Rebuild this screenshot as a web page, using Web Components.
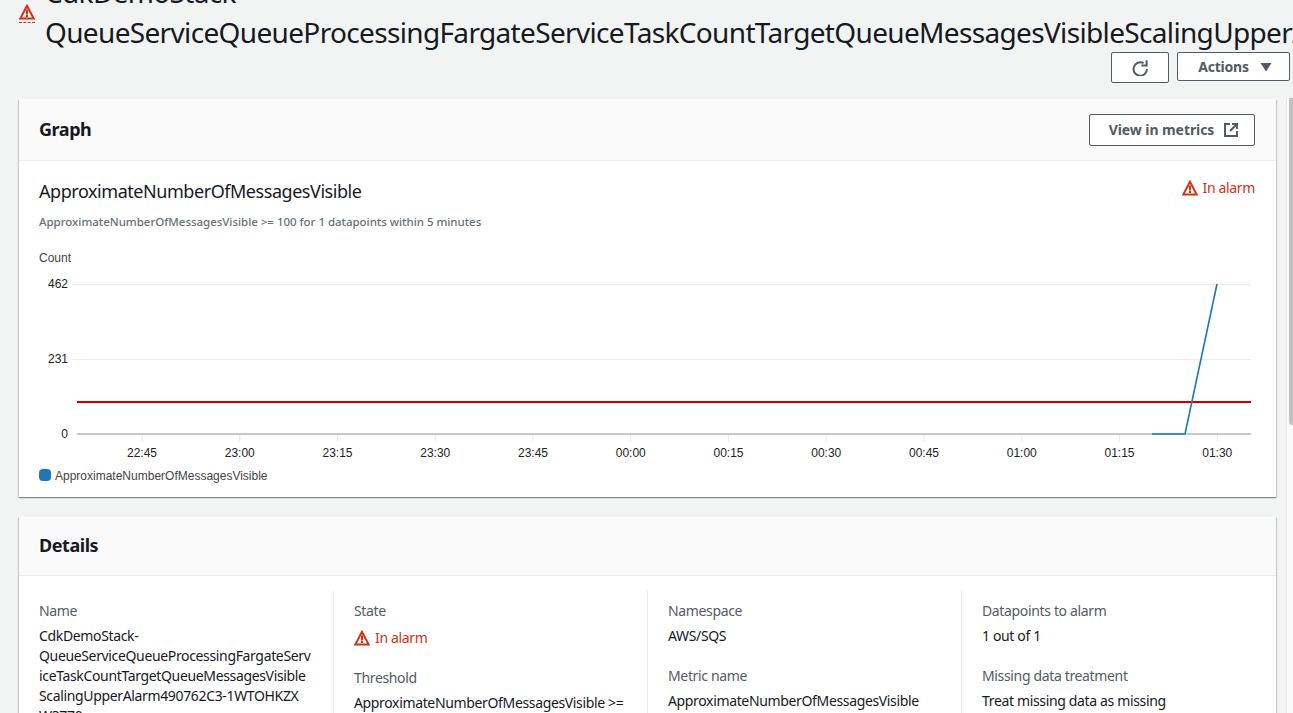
<!DOCTYPE html>
<html>
<head>
<meta charset="utf-8">
<title>Alarm</title>
<style>
  html, body { margin: 0; height: 100%; overflow: hidden; }
  body {
    background: #f2f3f3;
    color: #16191f;
    font-family: "Noto Sans", "Liberation Sans", sans-serif;
    font-size: 14px;
  }
</style>
</head>
<body>
<alarm-page>
  <alarm-header slot="header" title-text="CdkDemoStack- QueueServiceQueueProcessingFargateServiceTaskCountTargetQueueMessagesVisibleScalingUpperAlarm490762C3-1WTOHKZXW3770">
    <aws-button class="refresh" slot="actions" icon="refresh"></aws-button>
    <aws-button slot="actions" icon="caret" label="Actions"></aws-button>
  </alarm-header>

  <aws-card heading="Graph">
    <aws-button slot="action" icon="external" label="View in metrics"></aws-button>
    <metric-chart></metric-chart>
  </aws-card>

  <aws-card heading="Details">
    <details-grid>
      <div>
        <kv-item label="Name">
          <span style="display:block">CdkDemoStack-</span>
          <span style="display:block">QueueServiceQueueProcessingFargateServ</span>
          <span style="display:block">iceTaskCountTargetQueueMessagesVisible</span>
          <span style="display:block">ScalingUpperAlarm490762C3-1WTOHKZX</span>
          <span style="display:block">W3770</span>
        </kv-item>
      </div>
      <div>
        <kv-item label="State"><alarm-status></alarm-status></kv-item>
        <kv-item label="Threshold">ApproximateNumberOfMessagesVisible &gt;= 100 for 1 datapoints within 5 minutes</kv-item>
      </div>
      <div>
        <kv-item label="Namespace">AWS/SQS</kv-item>
        <kv-item label="Metric name">ApproximateNumberOfMessagesVisible</kv-item>
      </div>
      <div>
        <kv-item label="Datapoints to alarm">1 out of 1</kv-item>
        <kv-item label="Missing data treatment">Treat missing data as missing</kv-item>
      </div>
    </details-grid>
  </aws-card>
</alarm-page>
<page-scrollbar></page-scrollbar>

<script>
  const ICONS = {
    warning: '<path d="M8 1.8 1.4 14.4h13.2z" fill="none" stroke="currentColor" stroke-width="2"/><path d="M8 5.6v4.8M8 11v2" fill="none" stroke="currentColor" stroke-width="2"/>',
    refresh: '<path d="M15 9A6.7 6.7 0 1 1 11.6 3.2" fill="none" stroke="currentColor" stroke-width="2"/><path d="M14.6 0.2V5.4H9.4" fill="none" stroke="currentColor" stroke-width="2"/>',
    caret: '<path d="M2.5 4h11L8 12.5z" fill="currentColor"/>',
    external: '<path d="M7 2H2v12h12V9" fill="none" stroke="currentColor" stroke-width="2"/><path d="M9 2h5v5M14 2 7 9" fill="none" stroke="currentColor" stroke-width="2"/>'
  }

  class AlarmPage extends HTMLElement {
    constructor () {
      super()
      this.attachShadow({ mode: 'open' }).innerHTML = `
        <style>
          :host { display: block; margin-top: -25px; }
          .cards { display: flex; flex-direction: column; gap: 20px; padding: 16px 17px 0 19px; }
        </style>
        <slot name="header"></slot>
        <div class="cards"><slot></slot></div>`
    }
  }

  class AlarmHeader extends HTMLElement {
    constructor () {
      super()
      this.attachShadow({ mode: 'open' }).innerHTML = `
        <style>
          :host { display: block; }
          .row { display: flex; gap: 10px; padding-left: 19px; height: 77px; overflow: hidden; }
          .warn { flex: none; width: 16px; margin-top: 29px; color: #d13212; }
          .warn svg { display: block; width: 16px; height: 16px; }
          .warn i { display: block; margin-top: 2px; border-top: 1px dashed #d13212; }
          h1 {
            margin: -3px 0 0; min-width: 0; flex: 1; font-weight: 400; font-size: 28px; line-height: 40px;
            letter-spacing: -0.0235em; color: #16191f; white-space: pre; overflow: hidden;
          }
          .actions { display: flex; justify-content: flex-end; align-items: flex-start; gap: 8px; padding-right: 3px; }
        </style>
        <div class="row">
          <div class="warn"><svg viewBox="0 0 16 16">${ICONS.warning}</svg><i></i></div>
          <h1></h1>
        </div>
        <div class="actions"><slot name="actions"></slot></div>`
    }

    connectedCallback () {
      this.shadowRoot.querySelector('h1').textContent = this.getAttribute('title-text').replace(' ', '\n')
    }
  }

  class AwsButton extends HTMLElement {
    constructor () {
      super()
      this.attachShadow({ mode: 'open' })
    }

    connectedCallback () {
      let icon = this.getAttribute('icon')
      let label = this.getAttribute('label') || ''
      this.shadowRoot.innerHTML = `
        <style>
          :host { display: inline-block; }
          button {
            display: flex; align-items: center; justify-content: center; gap: 9px; box-sizing: border-box;
            width: 166px; height: 32px; padding: 0 0 0 4px; background: #fff; border: 1px solid #545b64; border-radius: 2px;
            color: #545b64; font: 700 14px/20px "Noto Sans", "Liberation Sans", sans-serif; letter-spacing: -0.005em;
          }
          svg { display: block; width: 16px; height: 16px; }
          :host([icon=refresh]) button { width: 58px; height: 31px; padding: 0; }
          :host([icon=caret]) button { width: 113px; height: 29px; padding: 0 0 0 5px; letter-spacing: -0.015em; }
        </style>
        <button>${label ? `<span>${label}</span>` : ''}<svg viewBox="0 0 16 16">${ICONS[icon]}</svg></button>`
    }
  }

  class AwsCard extends HTMLElement {
    constructor () {
      super()
      this.attachShadow({ mode: 'open' })
    }

    connectedCallback () {
      this.shadowRoot.innerHTML = `
        <style>
          :host { display: block; background: #fff; box-shadow: 0 1px 1px 0 rgba(0,28,36,.3), 1px 1px 1px 0 rgba(0,28,36,.15), -1px 1px 1px 0 rgba(0,28,36,.15); }
          header {
            display: flex; align-items: center; justify-content: space-between; box-sizing: border-box;
            height: 62px; padding: 0 21px 0 20px; background: #fafafa; border-bottom: 1px solid #eaeded;
          }
          h2 { margin: -2px 0 0; font-size: 18px; line-height: 22px; font-weight: 700; letter-spacing: -0.025em; color: #16191f; }
        </style>
        <header><h2>${this.getAttribute('heading')}</h2><slot name="action"></slot></header>
        <slot></slot>`
      if (this.getAttribute('heading') === 'Details') {
        this.shadowRoot.querySelector('header').style.height = '59px'
      }
    }
  }

  class AlarmStatus extends HTMLElement {
    constructor () {
      super()
      this.attachShadow({ mode: 'open' }).innerHTML = `
        <style>
          :host { display: flex; align-items: center; gap: 5px; height: 20px; padding-top: 2px; color: #d13212; font-size: 14px; line-height: 20px; letter-spacing: -0.025em; }
          svg { display: block; width: 16px; height: 16px; }
        </style>
        <svg viewBox="0 0 16 16">${ICONS.warning}</svg><span>In alarm</span>`
    }
  }

  class MetricChart extends HTMLElement {
    constructor () {
      super()
      let ticks = ['22:45', '23:00', '23:15', '23:30', '23:45', '00:00', '00:15', '00:30', '00:45', '01:00', '01:15', '01:30']
      // svg coordinates: x=0 is the card's left edge, y=0 is y=240 in the page
      let tickMarks = ticks.map((t, i) => {
        let x = 123 + i * 97.75
        return `<line x1="${x}" x2="${x}" y1="195" y2="201" stroke="#e6e6e6"/><text x="${x}" y="217" text-anchor="middle">${t}</text>`
      }).join('')
      this.attachShadow({ mode: 'open' }).innerHTML = `
        <style>
          :host { display: block; padding: 19px 21px 0 20px; height: 336px; box-sizing: border-box; position: relative; }
          .top { display: flex; justify-content: space-between; align-items: flex-start; }
          h3 { margin: 0; font-weight: 400; font-size: 18px; line-height: 22px; letter-spacing: -0.025em; color: #16191f; }
          p { margin: 0; padding-top: 12px; font-size: 11.5px; line-height: 16px; font-weight: 500; letter-spacing: -0.026px; color: #687078; }
          alarm-status { margin-top: -2px; padding-top: 0; }
          svg.plot { position: absolute; left: 0; top: 79px; width: 1257px; height: 250px; }
          text { font: 12px "Liberation Sans", Arial, sans-serif; fill: #222; }
          .count, .legend { fill: #444; }
        </style>
        <div class="top"><h3>ApproximateNumberOfMessagesVisible</h3><alarm-status></alarm-status></div>
        <p>ApproximateNumberOfMessagesVisible &gt;= 100 for 1 datapoints within 5 minutes</p>
        <svg class="plot" viewBox="0 0 1257 250">
          <text class="count" x="20" y="22">Count</text>
          <line x1="53" x2="1232" y1="44.5" y2="44.5" stroke="#ececec"/>
          <line x1="53" x2="1232" y1="119.5" y2="119.5" stroke="#ececec"/>
          <text x="49" y="48" text-anchor="end">462</text>
          <text x="49" y="123" text-anchor="end">231</text>
          <text x="49" y="198" text-anchor="end">0</text>
          ${tickMarks}
          <line x1="58" x2="1232" y1="194" y2="194" stroke="#c8c8c8" stroke-width="2"/>
          <line x1="58" x2="1232" y1="162" y2="162" stroke="#d00000" stroke-width="2"/>
          <path d="M1133 194H1166L1198 44" fill="none" stroke="#1f77b4" stroke-width="1.6"/>
          <rect x="20" y="229" width="12" height="12" rx="4" fill="#1f77b4"/>
          <text class="legend" x="36" y="240">ApproximateNumberOfMessagesVisible</text>
        </svg>`
    }
  }

  class DetailsGrid extends HTMLElement {
    constructor () {
      super()
      this.attachShadow({ mode: 'open' }).innerHTML = `
        <style>
          :host { display: block; padding: 15px 0 0 0; }
          ::slotted(div) { box-sizing: border-box; padding: 10px 20px 0 20px; border-left: 1px solid #eaeded; min-width: 0; }
          ::slotted(div:first-child) { border-left: 0; }
          .grid { display: grid; grid-template-columns: repeat(4, 314px); }
        </style>
        <div class="grid"><slot></slot></div>`
    }
  }

  class KvItem extends HTMLElement {
    constructor () {
      super()
      this.attachShadow({ mode: 'open' })
    }

    connectedCallback () {
      this.shadowRoot.innerHTML = `
        <style>
          :host { display: block; margin-bottom: 20px; font-size: 14px; line-height: 20px; letter-spacing: -0.025em; color: #16191f; }
          .label { margin-bottom: 5px; color: #545b64; }
        </style>
        <div class="label">${this.getAttribute('label')}</div>
        <slot></slot>`
    }
  }

  class PageScrollbar extends HTMLElement {
    constructor () {
      super()
      this.attachShadow({ mode: 'open' }).innerHTML = `
        <style>
          :host { position: fixed; top: 98px; right: 0; bottom: 0; width: 7px; box-sizing: border-box; background: #fafafa; border-left: 1px solid #e6e8e8; }
          div { position: absolute; top: 0; right: 0; width: 4px; height: 327px; background: #c1c1c1; border-radius: 0 0 0 3px; }
        </style>
        <div></div>`
    }
  }

  window.customElements.define('alarm-page', AlarmPage)
  window.customElements.define('alarm-header', AlarmHeader)
  window.customElements.define('aws-button', AwsButton)
  window.customElements.define('aws-card', AwsCard)
  window.customElements.define('alarm-status', AlarmStatus)
  window.customElements.define('metric-chart', MetricChart)
  window.customElements.define('details-grid', DetailsGrid)
  window.customElements.define('kv-item', KvItem)
  window.customElements.define('page-scrollbar', PageScrollbar)
</script>
</body>
</html>
